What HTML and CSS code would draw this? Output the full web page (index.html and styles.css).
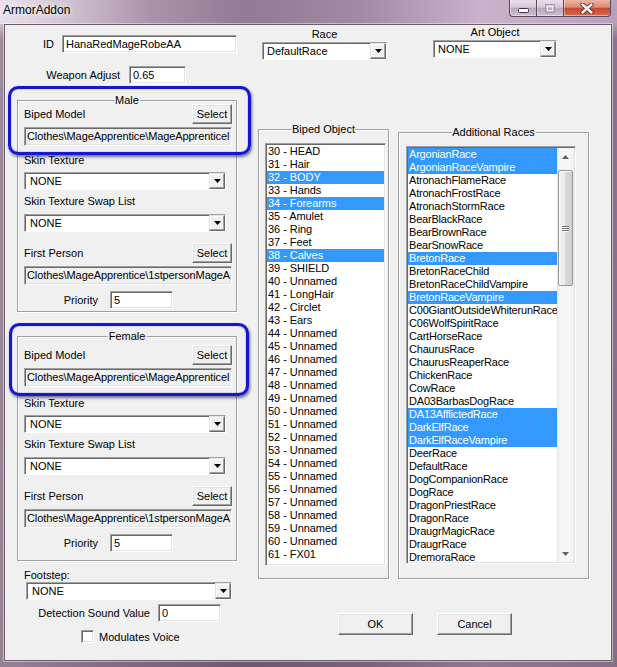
FILE: index.html
```html
<!DOCTYPE html>
<html>
<head>
  <link rel="stylesheet" href="styles.css">
</head>
<body>
  <div class="window">
    <div class="titlebar">
      <span class="title">ArmorAddon</span>
      <div class="caption-buttons">
        <span class="cap-btn cap-min">
          <svg width="11" height="5" viewBox="0 0 11 5"><rect x="0.5" y="0.5" width="10" height="4" rx="1" fill="#fff" stroke="#3d3347"/></svg>
        </span>
        <span class="cap-btn cap-max">
          <svg width="10" height="9" viewBox="0 0 10 9"><rect x="0.5" y="0.5" width="9" height="8" fill="none" stroke="#a896aa"/><rect x="2.5" y="2.5" width="5" height="4" fill="none" stroke="#f4eef5"/></svg>
        </span>
        <span class="cap-btn cap-close">
          <svg width="14" height="11" viewBox="0 0 14 11"><path d="M2.5 1.5 L11.5 9.5 M11.5 1.5 L2.5 9.5" stroke="#50262a" stroke-width="4.2" stroke-linecap="round"/><path d="M2.5 1.5 L11.5 9.5 M11.5 1.5 L2.5 9.5" stroke="#fff" stroke-width="2.4" stroke-linecap="round"/></svg>
        </span>
      </div>
    </div>

    <div class="client">
      <!-- left column: ids, gender groups, sound -->
      <div class="left-col">
        <div class="field-row id-row">
          <span class="label">ID</span>
          <div class="edit">HanaRedMageRobeAA</div>
        </div>
        <div class="field-row weapon-row">
          <span class="label">Weapon Adjust</span>
          <div class="edit">0.65</div>
        </div>

        <div class="group gender male">
          <div class="group-title">Male</div>
          <div class="model-row">
            <span>Biped Model</span>
            <div class="button select">Select</div>
          </div>
          <div class="edit path">Clothes\MageApprentice\MageApprenticel</div>
          <div class="caption skin-label">Skin Texture</div>
          <div class="combo skin-combo">
            <span class="combo-text">NONE</span>
            <span class="combo-arrow"><svg width="7" height="4" viewBox="0 0 7 4"><polygon points="0,0 7,0 3.5,4" fill="#000"/></svg></span>
          </div>
          <div class="caption swap-label">Skin Texture Swap List</div>
          <div class="combo skin-combo">
            <span class="combo-text">NONE</span>
            <span class="combo-arrow"><svg width="7" height="4" viewBox="0 0 7 4"><polygon points="0,0 7,0 3.5,4" fill="#000"/></svg></span>
          </div>
          <div class="model-row first-person">
            <span>First Person</span>
            <div class="button select">Select</div>
          </div>
          <div class="edit path">Clothes\MageApprentice\1stpersonMageA</div>
          <div class="field-row priority-row">
            <span class="label">Priority</span>
            <div class="edit">5</div>
          </div>
        </div>

        <div class="group gender female">
          <div class="group-title">Female</div>
          <div class="model-row">
            <span>Biped Model</span>
            <div class="button select">Select</div>
          </div>
          <div class="edit path">Clothes\MageApprentice\MageApprenticel</div>
          <div class="caption skin-label">Skin Texture</div>
          <div class="combo skin-combo">
            <span class="combo-text">NONE</span>
            <span class="combo-arrow"><svg width="7" height="4" viewBox="0 0 7 4"><polygon points="0,0 7,0 3.5,4" fill="#000"/></svg></span>
          </div>
          <div class="caption swap-label">Skin Texture Swap List</div>
          <div class="combo skin-combo">
            <span class="combo-text">NONE</span>
            <span class="combo-arrow"><svg width="7" height="4" viewBox="0 0 7 4"><polygon points="0,0 7,0 3.5,4" fill="#000"/></svg></span>
          </div>
          <div class="model-row first-person">
            <span>First Person</span>
            <div class="button select">Select</div>
          </div>
          <div class="edit path">Clothes\MageApprentice\1stpersonMageA</div>
          <div class="field-row priority-row">
            <span class="label">Priority</span>
            <div class="edit">5</div>
          </div>
        </div>

        <div class="caption footstep-label">Footstep:</div>
        <div class="combo footstep-combo">
          <span class="combo-text">NONE</span>
          <span class="combo-arrow"><svg width="7" height="4" viewBox="0 0 7 4"><polygon points="0,0 7,0 3.5,4" fill="#000"/></svg></span>
        </div>
        <div class="field-row detection-row">
          <span class="label">Detection Sound Value</span>
          <div class="edit">0</div>
        </div>
        <div class="check-row">
          <span class="checkbox"></span>
          <span>Modulates Voice</span>
        </div>
      </div>

      <!-- right side: race pickers, lists, dialog buttons -->
      <div class="right-col">
        <div class="selectors">
          <div class="selector race">
            <div class="caption">Race</div>
            <div class="combo">
              <span class="combo-text">DefaultRace</span>
              <span class="combo-arrow"><svg width="7" height="4" viewBox="0 0 7 4"><polygon points="0,0 7,0 3.5,4" fill="#000"/></svg></span>
            </div>
          </div>
          <div class="selector art">
            <div class="caption">Art Object</div>
            <div class="combo">
              <span class="combo-text">NONE</span>
              <span class="combo-arrow"><svg width="7" height="4" viewBox="0 0 7 4"><polygon points="0,0 7,0 3.5,4" fill="#000"/></svg></span>
            </div>
          </div>
        </div>

        <div class="lists">
          <div class="group biped-group">
            <div class="group-title">Biped Object</div>
            <div class="listbox biped-list">
              <div class="list-item">30 - HEAD</div>
              <div class="list-item">31 - Hair</div>
              <div class="list-item selected">32 - BODY</div>
              <div class="list-item">33 - Hands</div>
              <div class="list-item selected">34 - Forearms</div>
              <div class="list-item">35 - Amulet</div>
              <div class="list-item">36 - Ring</div>
              <div class="list-item">37 - Feet</div>
              <div class="list-item selected">38 - Calves</div>
              <div class="list-item">39 - SHIELD</div>
              <div class="list-item">40 - Unnamed</div>
              <div class="list-item">41 - LongHair</div>
              <div class="list-item">42 - Circlet</div>
              <div class="list-item">43 - Ears</div>
              <div class="list-item">44 - Unnamed</div>
              <div class="list-item">45 - Unnamed</div>
              <div class="list-item">46 - Unnamed</div>
              <div class="list-item">47 - Unnamed</div>
              <div class="list-item">48 - Unnamed</div>
              <div class="list-item">49 - Unnamed</div>
              <div class="list-item">50 - Unnamed</div>
              <div class="list-item">51 - Unnamed</div>
              <div class="list-item">52 - Unnamed</div>
              <div class="list-item">53 - Unnamed</div>
              <div class="list-item">54 - Unnamed</div>
              <div class="list-item">55 - Unnamed</div>
              <div class="list-item">56 - Unnamed</div>
              <div class="list-item">57 - Unnamed</div>
              <div class="list-item">58 - Unnamed</div>
              <div class="list-item">59 - Unnamed</div>
              <div class="list-item">60 - Unnamed</div>
              <div class="list-item">61 - FX01</div>
            </div>
          </div>

          <div class="group races-group">
            <div class="group-title">Additional Races</div>
            <div class="listbox races-list">
              <div class="list-items">
                <div class="list-item selected">ArgonianRace</div>
                <div class="list-item selected">ArgonianRaceVampire</div>
                <div class="list-item">AtronachFlameRace</div>
                <div class="list-item">AtronachFrostRace</div>
                <div class="list-item">AtronachStormRace</div>
                <div class="list-item">BearBlackRace</div>
                <div class="list-item">BearBrownRace</div>
                <div class="list-item">BearSnowRace</div>
                <div class="list-item selected">BretonRace</div>
                <div class="list-item">BretonRaceChild</div>
                <div class="list-item">BretonRaceChildVampire</div>
                <div class="list-item selected">BretonRaceVampire</div>
                <div class="list-item">C00GiantOutsideWhiterunRace</div>
                <div class="list-item">C06WolfSpiritRace</div>
                <div class="list-item">CartHorseRace</div>
                <div class="list-item">ChaurusRace</div>
                <div class="list-item">ChaurusReaperRace</div>
                <div class="list-item">ChickenRace</div>
                <div class="list-item">CowRace</div>
                <div class="list-item">DA03BarbasDogRace</div>
                <div class="list-item selected">DA13AfflictedRace</div>
                <div class="list-item selected">DarkElfRace</div>
                <div class="list-item selected">DarkElfRaceVampire</div>
                <div class="list-item">DeerRace</div>
                <div class="list-item">DefaultRace</div>
                <div class="list-item">DogCompanionRace</div>
                <div class="list-item">DogRace</div>
                <div class="list-item">DragonPriestRace</div>
                <div class="list-item">DragonRace</div>
                <div class="list-item">DraugrMagicRace</div>
                <div class="list-item">DraugrRace</div>
                <div class="list-item">DremoraRace</div>
              </div>
              <div class="scrollbar">
                <span class="sb-arrow"><svg width="7" height="4" viewBox="0 0 7 4"><polygon points="3.5,0 7,4 0,4" fill="#606060"/></svg></span>
                <div class="sb-thumb">
                  <span class="grip"></span><span class="grip"></span><span class="grip"></span>
                </div>
                <div class="sb-space"></div>
                <span class="sb-arrow"><svg width="7" height="4" viewBox="0 0 7 4"><polygon points="0,0 7,0 3.5,4" fill="#606060"/></svg></span>
              </div>
            </div>
          </div>
        </div>

        <div class="actions">
          <div class="button dlg-btn ok">OK</div>
          <div class="button dlg-btn cancel">Cancel</div>
        </div>
      </div>
    </div>

    <div class="callout callout-male"></div>
    <div class="callout callout-female"></div>
  </div>
</body>
</html>
```

FILE: styles.css
```css
body {
  margin: 0;
  font-family: "Liberation Sans", Arial, sans-serif;
  font-size: 11px;
  color: #000;
}
.window {
  position: relative;
  width: 617px;
  height: 667px;
  display: flex;
  flex-direction: column;
  overflow: hidden;
  background:
    linear-gradient(180deg, rgba(60,40,62,0) 0, rgba(60,40,62,0) 22px, rgba(60,40,62,0.36) 40px, rgba(60,40,62,0.42) 100%),
    linear-gradient(90deg, #d3c2d4 0%, #b39eb4 18%, #907c92 40%, #a08ba2 58%, #c9b3ca 78%, #b8a0ba 100%);
}

/* title bar */
.titlebar {
  flex: none;
  height: 24px;
  display: flex;
  align-items: flex-start;
  background: linear-gradient(90deg, rgba(255,255,255,0.5) 0, rgba(255,255,255,0.25) 70px, rgba(255,255,255,0) 150px);
}
.title {
  margin: 3px 0 0 3px;
  font-size: 12px;
  line-height: 15px;
  text-shadow: 0 0 6px #fff, 0 0 10px #fff;
}
.caption-buttons {
  margin-left: auto;
  margin-right: 6px;
  display: flex;
}
.cap-btn {
  box-sizing: border-box;
  height: 17px;
  display: flex;
  align-items: center;
  justify-content: center;
  border: 1px solid #5b4a5e;
  border-top: none;
  box-shadow: inset 0 -1px 0 rgba(255,255,255,0.45), inset 1px 0 0 rgba(255,255,255,0.35);
}
.cap-min {
  width: 27px;
  border-right: none;
  border-bottom-left-radius: 4px;
  background: linear-gradient(180deg, #e9dfea 0, #d6c8d8 45%, #bba8be 52%, #cdbfcf 100%);
  padding-top: 4px;
}
.cap-max {
  width: 27px;
  border-right: none;
  background: linear-gradient(180deg, #e9dfea 0, #d6c8d8 45%, #bba8be 52%, #cdbfcf 100%);
}
.cap-close {
  width: 48px;
  border-bottom-right-radius: 4px;
  background: linear-gradient(180deg, #ecb3a4 0, #dc8a74 45%, #c74a30 52%, #d46a4e 100%);
}

/* client area */
.client {
  flex: 1;
  margin: 0 5px 6px 4px;
  display: flex;
  align-items: flex-start;
  background: #f0f0f0;
  border: 1px solid #6c5c6e;
  box-shadow: 0 0 0 1px rgba(255,255,255,0.45);
}

/* common controls */
.edit {
  box-sizing: border-box;
  height: 18px;
  padding: 0 3px;
  line-height: 16px;
  white-space: nowrap;
  overflow: hidden;
  background: #fff;
  border: 1px solid;
  border-color: #a0a0a0 #fff #fff #a0a0a0;
  box-shadow: inset 1px 1px 0 #696969, inset -1px -1px 0 #e3e3e3;
}
.button {
  box-sizing: border-box;
  display: flex;
  align-items: center;
  justify-content: center;
  background: #f0f0f0;
  border: 1px solid;
  border-color: #fff #696969 #696969 #fff;
  box-shadow: inset -1px -1px 0 #a0a0a0, inset 1px 1px 0 #e3e3e3;
}
.combo {
  box-sizing: border-box;
  height: 18px;
  display: flex;
  align-items: center;
  padding-left: 5px;
  background: #fff;
  border: 1px solid;
  border-color: #a0a0a0 #fff #fff #a0a0a0;
  box-shadow: inset 1px 1px 0 #696969;
}
.combo-text {
  flex: 1;
  white-space: nowrap;
  overflow: hidden;
}
.combo-arrow {
  box-sizing: border-box;
  width: 16px;
  height: 16px;
  display: flex;
  align-items: center;
  justify-content: center;
  background: #f0f0f0;
  border: 1px solid;
  border-color: #e3e3e3 #696969 #696969 #e3e3e3;
  box-shadow: inset -1px -1px 0 #a0a0a0, inset 1px 1px 0 #fff;
}
.caption {
  line-height: 13px;
  white-space: nowrap;
}
.field-row {
  display: flex;
  align-items: center;
  height: 18px;
}
.field-row .label {
  flex: none;
  text-align: right;
  white-space: nowrap;
}
.checkbox {
  box-sizing: border-box;
  width: 13px;
  height: 13px;
  background: #fff;
  border: 1px solid;
  border-color: #a0a0a0 #fff #fff #a0a0a0;
  box-shadow: inset 1px 1px 0 #696969, inset -1px -1px 0 #e3e3e3;
}

/* group boxes */
.group {
  position: relative;
  box-sizing: border-box;
  border: 1px solid #a0a0a0;
  box-shadow: inset 1px 1px 0 #fff, 1px 1px 0 #fff;
}
.group-title {
  position: absolute;
  top: -7px;
  left: 50%;
  transform: translateX(-50%);
  padding: 0 1px;
  line-height: 13px;
  white-space: nowrap;
  background: #f0f0f0;
}

/* left column */
.left-col {
  width: 220px;
  margin-left: 12px;
  display: flex;
  flex-direction: column;
}
.id-row {
  margin-top: 10px;
}
.id-row .label {
  width: 37px;
  margin-right: 8px;
}
.id-row .edit {
  width: 175px;
}
.weapon-row {
  margin-top: 13px;
}
.weapon-row .label {
  width: 103px;
  margin-right: 9px;
}
.weapon-row .edit {
  width: 57px;
}
.gender {
  display: flex;
  flex-direction: column;
  padding: 3px 4px 2px 6px;
}
.male {
  margin-top: 16px;
}
.female {
  margin-top: 24px;
  padding-top: 8px;
  padding-bottom: 8px;
}
.model-row {
  height: 20px;
  display: flex;
  align-items: center;
  justify-content: space-between;
}
.select {
  width: 40px;
  height: 20px;
}
.path {
  margin-top: 3px;
  width: 208px;
  height: 19px;
  padding: 0 0 0 2px;
  line-height: 17px;
  letter-spacing: -0.1px;
  background: #f0f0f0;
}
.skin-label {
  margin-top: 8px;
}
.female .skin-label {
  margin-top: 10px;
}
.skin-combo {
  margin-top: 5px;
  width: 202px;
}
.swap-label {
  margin-top: 5px;
}
.swap-label + .skin-combo {
  margin-top: 6px;
}
.first-person {
  margin-top: 11px;
}
.priority-row {
  margin-top: 6px;
}
.priority-row .label {
  width: 74px;
  margin-right: 12px;
}
.priority-row .edit {
  width: 63px;
}
.footstep-label {
  margin: 8px 0 0 7px;
}
.footstep-combo {
  margin-left: 9px;
  width: 206px;
}
.detection-row {
  margin-top: 4px;
}
.detection-row .label {
  width: 133px;
  margin-right: 8px;
}
.detection-row .edit {
  width: 63px;
}
.check-row {
  margin-top: 8px;
  height: 13px;
  display: flex;
  align-items: center;
  gap: 5px;
}
.check-row .checkbox {
  margin-left: 64px;
}

/* right column */
.right-col {
  margin-left: 21px;
  display: flex;
  flex-direction: column;
}
.selectors {
  margin-top: 1px;
  display: flex;
  align-items: flex-start;
}
.selector {
  display: flex;
  flex-direction: column;
}
.selector .caption {
  text-align: center;
}
.selector .combo {
  margin-top: 1px;
  padding-left: 4px;
}
.race {
  margin: 2px 0 0 4px;
  width: 125px;
}
.art {
  margin-left: 46px;
  width: 124px;
}
.lists {
  margin-top: 69px;
  display: flex;
  align-items: flex-start;
}
.biped-group {
  width: 131px;
  height: 450px;
  padding: 13px 0 0 6px;
}
.races-group {
  margin: 3px 0 0 9px;
  width: 191px;
  height: 447px;
  padding: 13px 0 0 7px;
}
.listbox {
  box-sizing: border-box;
  overflow: hidden;
  background: #fff;
  border: 1px solid;
  border-color: #a0a0a0 #fff #fff #a0a0a0;
  box-shadow: inset 1px 1px 0 #696969, inset -1px -1px 0 #e3e3e3;
  padding: 1px;
}
.biped-list {
  width: 121px;
  height: 423px;
}
.races-list {
  width: 170px;
  height: 418px;
  display: flex;
}
.list-items {
  flex: 1;
  overflow: hidden;
}
.list-item {
  height: 13px;
  line-height: 13px;
  padding-left: 1px;
  letter-spacing: -0.05px;
  white-space: nowrap;
  overflow: hidden;
}
.races-list .list-item {
  letter-spacing: -0.2px;
}
.list-item.selected {
  background: #3399ff;
  color: #fff;
}
.scrollbar {
  width: 17px;
  flex: none;
  display: flex;
  flex-direction: column;
  align-items: center;
  background: linear-gradient(90deg, #e2e2e2 0, #f4f4f4 2px, #f6f6f6 85%, #ececec 100%);
}
.sb-arrow {
  width: 17px;
  height: 17px;
  flex: none;
  display: flex;
  align-items: center;
  justify-content: center;
}
.sb-thumb {
  box-sizing: border-box;
  margin-top: 5px;
  width: 15px;
  height: 116px;
  display: flex;
  flex-direction: column;
  align-items: center;
  justify-content: center;
  gap: 1px;
  border: 1px solid #979797;
  border-radius: 2px;
  background: linear-gradient(90deg, #f2f2f2 0, #ebebeb 45%, #d9d9d9 50%, #cfcfcf 100%);
  box-shadow: inset 1px 1px 0 #fbfbfb;
}
.grip {
  width: 7px;
  height: 1px;
  background: #6f6f6f;
  box-shadow: 0 1px 0 #fff;
}
.sb-space {
  flex: 1;
}
.actions {
  margin-top: 34px;
  display: flex;
}
.dlg-btn {
  width: 75px;
  height: 22px;
}
.ok {
  margin-left: 80px;
}
.cancel {
  margin-left: 24px;
}

/* blue annotation rectangles drawn over the dialog */
.callout {
  position: absolute;
  box-sizing: border-box;
  border: 3px solid #1616d4;
  border-radius: 10px;
  box-shadow: 1px 2px 3px rgba(10,10,60,0.55), inset 0 0 1px #00006a;
  pointer-events: none;
}
.callout-male {
  left: 8px;
  top: 86px;
  width: 243px;
  height: 69px;
}
.callout-female {
  left: 9px;
  top: 323px;
  width: 240px;
  height: 73px;
}
```
